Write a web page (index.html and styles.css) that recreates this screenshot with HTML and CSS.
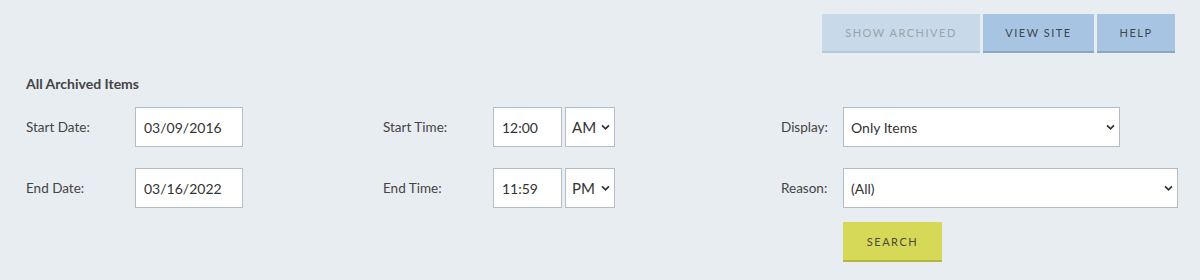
FILE: index.html
```html
<!DOCTYPE html>
<html>
<head>
<meta charset="utf-8">
<link rel="stylesheet" href="styles.css">
</head>
<body>
<div class="page">
  <div class="topbar">
    <button class="btn btn-light">SHOW ARCHIVED</button>
    <button class="btn btn-blue">VIEW SITE</button>
    <button class="btn btn-blue btn-help">HELP</button>
  </div>
  <h2 class="title">All Archived Items</h2>
  <div class="form">
    <label class="lbl">Start Date:</label>
    <div class="cell"><input class="inp date" value="03/09/2016"></div>
    <label class="lbl">Start Time:</label>
    <div class="cell time">
      <input class="inp hour" value="12:00">
      <div class="sel ampm"><span>AM</span><svg class="chev" viewBox="0 0 10 7"><path d="M1.2 1.2 L5 5 L8.8 1.2" /></svg></div>
    </div>
    <label class="lbl">Display:</label>
    <div class="cell"><div class="sel display"><span>Only Items</span><svg class="chev" viewBox="0 0 10 7"><path d="M1.2 1.2 L5 5 L8.8 1.2" /></svg></div></div>

    <label class="lbl">End Date:</label>
    <div class="cell"><input class="inp date" value="03/16/2022"></div>
    <label class="lbl">End Time:</label>
    <div class="cell time">
      <input class="inp hour" value="11:59">
      <div class="sel ampm"><span>PM</span><svg class="chev" viewBox="0 0 10 7"><path d="M1.2 1.2 L5 5 L8.8 1.2" /></svg></div>
    </div>
    <label class="lbl">Reason:</label>
    <div class="cell"><div class="sel reason"><span>(All)</span><svg class="chev" viewBox="0 0 10 7"><path d="M1.2 1.2 L5 5 L8.8 1.2" /></svg></div></div>

    <div class="cell search-cell"><button class="btn btn-search">SEARCH</button></div>
  </div>
</div>
</body>
</html>
```

FILE: styles.css
```css
html, body {
  margin: 0;
  padding: 0;
  background: #e8edf2;
}
body {
  font-family: "Lato", "Noto Sans", sans-serif;
  color: #444;
}
.page {
  padding: 14px 25px 0 26px;
}
.topbar {
  display: flex;
  justify-content: flex-end;
  gap: 3px;
}
.btn {
  font-family: "Lato", sans-serif;
  font-size: 11px;
  font-weight: normal;
  letter-spacing: 1.5px;
  border: none;
  border-bottom: 2px solid transparent;
  height: 39px;
  padding: 0;
  cursor: pointer;
}
.btn-light {
  background: #c8d9ea;
  color: #9da3a9;
  border-bottom-color: #b5c8db;
  width: 158px;
}
.btn-blue {
  background: #a7c5e2;
  color: #3f4650;
  border-bottom-color: #8aa8c6;
  width: 111px;
}
.btn-help {
  width: 78px;
}
.title {
  font-size: 14px;
  font-weight: bold;
  color: #444;
  margin: 21px 0 0;
  line-height: 20px;
}
.form {
  display: grid;
  grid-template-columns: 109px 248px 110px 288px 62px 1fr;
  grid-template-rows: 40px 40px auto;
  row-gap: 21px;
  align-items: center;
  margin-top: 13px;
}
.lbl {
  font-size: 13.5px;
  color: #444;
}
.cell {
  display: flex;
  align-items: center;
}
.time {
  gap: 3px;
}
.inp {
  box-sizing: border-box;
  height: 40px;
  border: 1px solid #b4bcc6;
  background: #fff;
  font-family: "Lato", sans-serif;
  font-size: 14px;
  color: #333;
  padding: 0 8px;
  margin: 0;
  outline: none;
}
.date {
  width: 108px;
}
.hour {
  width: 69px;
}
.sel {
  position: relative;
  box-sizing: border-box;
  height: 40px;
  border: 1px solid #b4bcc6;
  background: #fff;
  display: flex;
  align-items: center;
  padding-left: 7px;
  color: #333;
}
.ampm {
  width: 50px;
  font-size: 15px;
  padding-left: 6px;
}
.display {
  width: 277px;
  font-size: 14px;
}
.reason {
  width: 335px;
  font-size: 14px;
}
.chev {
  position: absolute;
  right: 4px;
  top: 16px;
  width: 9px;
  height: 7px;
  fill: none;
  stroke: #333;
  stroke-width: 2;
}
.search-cell {
  grid-column: 6;
  grid-row: 3;
  margin-top: -7px;
}
.btn-search {
  background: #d6d957;
  color: #4a4a3a;
  border-bottom-color: #b4b840;
  width: 99px;
  height: 40px;
}
```
